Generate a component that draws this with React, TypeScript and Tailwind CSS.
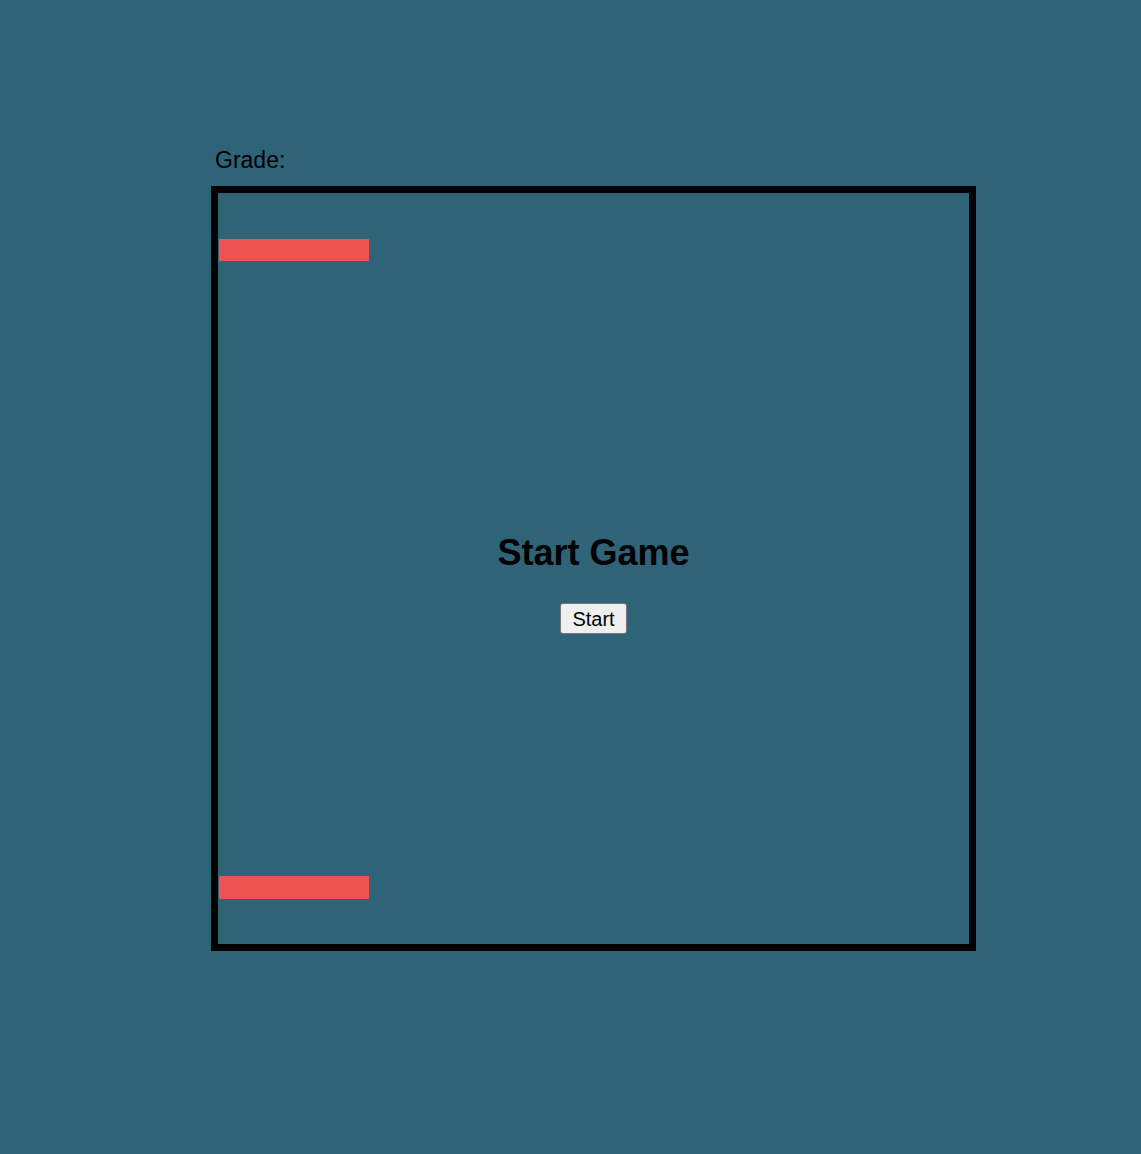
export default function App() {
  return (
    <main className="min-h-screen w-full bg-[#2f6377] font-['Liberation_Sans',Arial,sans-serif] text-black">
      <div className="pl-[211px] pt-[146px]">
        <p className="pl-[4px] text-[23px] leading-[28px]">Grade:</p>

        <div className="relative mt-[12px] h-[765px] w-[765px] border-[7px] border-black">
          {/* paddles */}
          <div className="absolute left-[1px] top-[46px] h-[22px] w-[150px] bg-[#ef5350]" />
          <div className="absolute bottom-[45px] left-[1px] h-[23px] w-[150px] bg-[#ef5350]" />

          <div className="flex flex-col items-center pt-[338px]">
            <h1 className="text-[36px] font-bold leading-[43px]">Start Game</h1>
            <button className="mt-[29px] h-[31px] w-[67px] rounded-[3px] border border-[#767676] bg-[#efefef] text-[20px] leading-none">
              Start
            </button>
          </div>
        </div>
      </div>
    </main>
  )
}
